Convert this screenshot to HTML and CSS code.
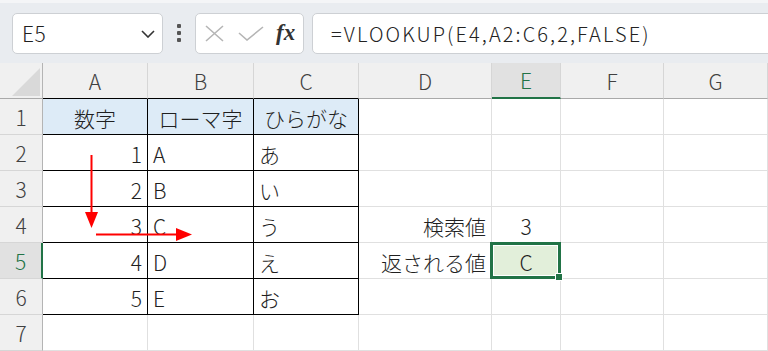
FILE: index.html
```html
<!DOCTYPE html>
<html lang="ja">
<head>
    <meta charset="UTF-8">
    <title>VLOOKUP</title>
    <link rel="stylesheet" href="styles.css">
</head>
<body>
    <!-- 数式バー -->
    <div class="toolbar">
        <div class="namebox">
            <span>E5</span>
            <svg class="chev" width="14" height="8" viewBox="0 0 14 8"><polyline points="1,1 7,7 13,1" fill="none" stroke="#333" stroke-width="1.6"/></svg>
        </div>
        <div class="dots"><i></i><i></i><i></i></div>
        <div class="fxbox">
            <svg width="19" height="17" viewBox="0 0 19 17"><path d="M1 1 L18 16 M18 1 L1 16" stroke="#b5b5b5" stroke-width="1.6" fill="none"/></svg>
            <svg width="26" height="15" viewBox="0 0 26 15"><polyline points="1,7 9,14 25,1" fill="none" stroke="#b5b5b5" stroke-width="1.6"/></svg>
            <span class="fx">fx</span>
        </div>
        <div class="formula">=VLOOKUP(E4,A2:C6,2,FALSE)</div>
    </div>

    <!-- シート -->
    <div class="sheet">
        <div class="hd corner"><svg width="30" height="30" viewBox="0 0 30 30"><polygon points="29,1 29,29 1,29" fill="#d9d9d9"/></svg></div>
        <div class="hd tb">A</div>
        <div class="hd tb">B</div>
        <div class="hd tb">C</div>
        <div class="hd">D</div>
        <div class="hd sel">E</div>
        <div class="hd">F</div>
        <div class="hd">G</div>

        <div class="rh">1</div>
        <div class="c t hl m">数字</div>
        <div class="c t hl m">ローマ字</div>
        <div class="c t hl m">ひらがな</div>
        <div class="c"></div><div class="c"></div><div class="c"></div><div class="c"></div>

        <div class="rh">2</div>
        <div class="c t r">1</div>
        <div class="c t">A</div>
        <div class="c t">あ</div>
        <div class="c"></div><div class="c"></div><div class="c"></div><div class="c"></div>

        <div class="rh">3</div>
        <div class="c t r">2</div>
        <div class="c t">B</div>
        <div class="c t">い</div>
        <div class="c"></div><div class="c"></div><div class="c"></div><div class="c"></div>

        <div class="rh">4</div>
        <div class="c t r">3</div>
        <div class="c t">C</div>
        <div class="c t">う</div>
        <div class="c r">検索値</div>
        <div class="c m">3</div>
        <div class="c"></div><div class="c"></div>

        <div class="rh sel">5</div>
        <div class="c t r">4</div>
        <div class="c t">D</div>
        <div class="c t">え</div>
        <div class="c r">返される値</div>
        <div class="c m active">C<span class="handle"></span></div>
        <div class="c"></div><div class="c"></div>

        <div class="rh">6</div>
        <div class="c t r">5</div>
        <div class="c t">E</div>
        <div class="c t">お</div>
        <div class="c"></div><div class="c"></div><div class="c"></div><div class="c"></div>

        <div class="rh">7</div>
        <div class="c"></div><div class="c"></div><div class="c"></div>
        <div class="c"></div><div class="c"></div><div class="c"></div><div class="c"></div>

        <!-- 矢印 -->
        <svg class="arrows" width="768" height="288" viewBox="0 63 768 288">
            <line x1="91.5" y1="155" x2="91.5" y2="213" stroke="#ff0000" stroke-width="2"/>
            <polygon points="85,212 98,212 91.5,228" fill="#ff0000"/>
            <line x1="96" y1="234.5" x2="177" y2="234.5" stroke="#ff0000" stroke-width="2"/>
            <polygon points="176,228 176,241 192,234.5" fill="#ff0000"/>
        </svg>
    </div>
</body>
</html>
```

FILE: styles.css
```css
*{margin:0; padding:0; box-sizing:border-box;}
body{width:768px; height:351px; overflow:hidden; background:#fff;
    font-family:"Noto Sans CJK JP", "Noto Sans", sans-serif; font-weight:300; color:#1f1f1f;}

.toolbar{height:63px; display:flex; align-items:center; padding:11px 0 11px 12px;
    background:#e9ecf0; border-top:3px solid #f4f5f7; overflow:hidden;}
.namebox{width:151px; height:41px; flex:none; background:#fff; border:1px solid #cdd0d4; border-radius:5px;
    display:flex; align-items:center; justify-content:space-between; padding:0 7px 0 9px;
    font-size:21px; letter-spacing:0.5px;}
.chev{margin-top:1px;}
.dots{width:32px; flex:none; display:flex; flex-direction:column; align-items:center; gap:3px;}
.dots i{display:block; width:4px; height:4px; background:#555; border-radius:1px;}
.fxbox{width:109px; height:41px; flex:none; background:#fff; border:1px solid #cdd0d4; border-radius:5px;
    display:flex; align-items:center; gap:14px; padding:0 0 0 9px;}
.fx{font-family:"Liberation Serif", serif; font-style:italic; font-weight:bold; font-size:23px; color:#333; margin-left:-2px;}
.formula{flex:none; width:480px; height:41px; margin-left:8px; background:#fff; border:1px solid #cdd0d4; border-radius:5px;
    display:flex; align-items:center; padding-left:18px; font-size:20px; letter-spacing:2.1px; color:#222;}

.sheet{position:relative; display:grid;
    grid-template-columns:43px 105px 106px 105px 133px 69px 103px 104px;
    grid-template-rows:36px repeat(7, 36px);
    font-size:21px;}
.hd{background:#f0f0f0; border-right:1px solid #d6d6d6; border-bottom:1px solid #a9a9a9;
    display:flex; align-items:center; justify-content:center; color:#404040;}
.hd.tb{border-bottom-color:#000;}
.hd.sel{background:#e1e1e1; color:#217346; border-bottom:2px solid #217346;}
.corner{align-items:flex-end; justify-content:flex-end; border-right:1px solid #b4b4b4; padding:0 1px 1px 0;}
.rh{background:#f0f0f0; border-right:1px solid #b4b4b4; border-bottom:1px solid #d6d6d6;
    display:flex; align-items:center; justify-content:center; color:#404040;}
.rh.sel{background:#e1e1e1; color:#217346; border-right:2px solid #217346;}

.c{border-right:1px solid #e0e0e0; border-bottom:1px solid #e0e0e0;
    display:flex; align-items:center; padding:2px 5px 0 5px; white-space:nowrap;}
.c.t{border-right-color:#000; border-bottom-color:#000;}
.hl{background:#ddebf7;}
.r{justify-content:flex-end;}
.m{justify-content:center;}

.active{position:relative; background:#e2efda;}
.active::after{content:""; position:absolute; top:-1px; left:-2px; right:-1px; bottom:-1px;
    border:3px solid #217346; box-shadow:inset 0 0 0 1px #fff;}
.handle{position:absolute; right:-3px; bottom:-3px; width:8px; height:8px; background:#217346;
    border:1px solid #fff; z-index:1;}

.arrows{position:absolute; left:0; top:0; pointer-events:none;}
```
